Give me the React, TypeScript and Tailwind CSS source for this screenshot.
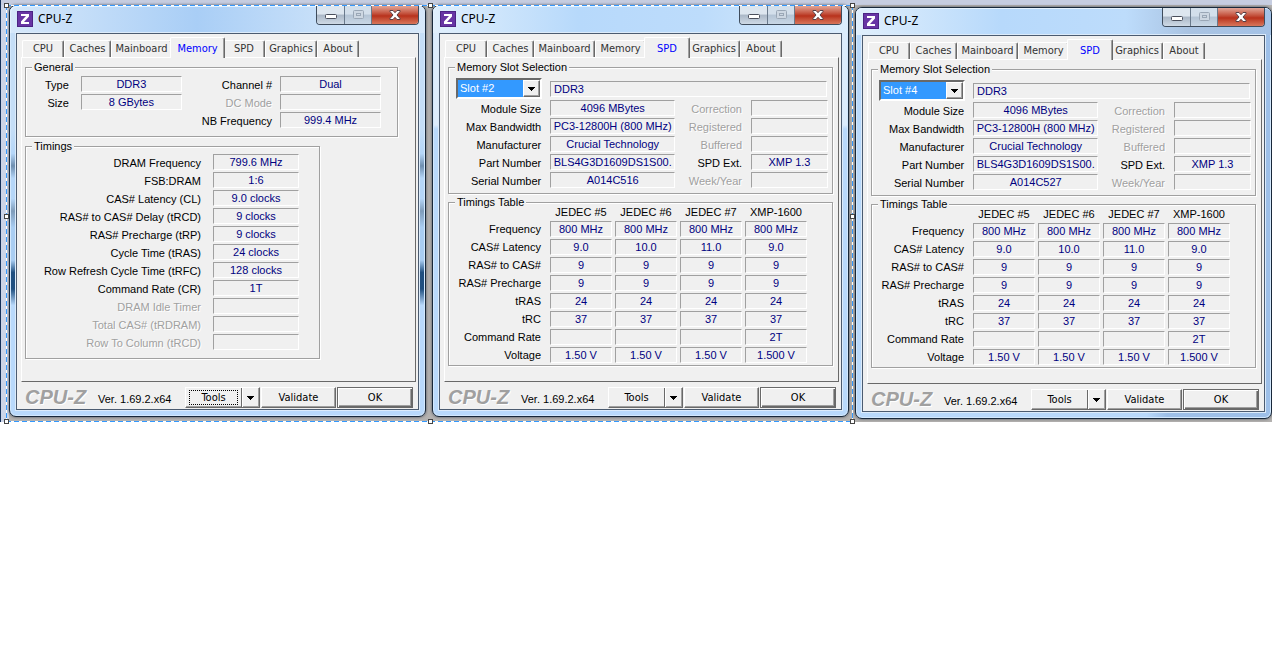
import { clsx } from 'clsx'
import type { ReactNode } from 'react'

type TabName = 'CPU' | 'Caches' | 'Mainboard' | 'Memory' | 'SPD' | 'Graphics' | 'About'

const TABS: { name: TabName; width: string }[] = [
  { name: 'CPU', width: 'w-[42px]' },
  { name: 'Caches', width: 'w-[47px]' },
  { name: 'Mainboard', width: 'w-[61px]' },
  { name: 'Memory', width: 'w-[51px]' },
  { name: 'SPD', width: 'w-[42px]' },
  { name: 'Graphics', width: 'w-[52px]' },
  { name: 'About', width: 'w-[42px]' },
]

const GENERAL_LEFT = [
  ['Type', 'DDR3'],
  ['Size', '8 GBytes'],
]

const GENERAL_RIGHT = [
  ['Channel #', 'Dual'],
  ['DC Mode', ''],
  ['NB Frequency', '999.4 MHz'],
]

const MEMORY_TIMINGS = [
  ['DRAM Frequency', '799.6 MHz'],
  ['FSB:DRAM', '1:6'],
  ['CAS# Latency (CL)', '9.0 clocks'],
  ['RAS# to CAS# Delay (tRCD)', '9 clocks'],
  ['RAS# Precharge (tRP)', '9 clocks'],
  ['Cycle Time (tRAS)', '24 clocks'],
  ['Row Refresh Cycle Time (tRFC)', '128 clocks'],
  ['Command Rate (CR)', '1T'],
  ['DRAM Idle Timer', ''],
  ['Total CAS# (tRDRAM)', ''],
  ['Row To Column (tRCD)', ''],
]

const MODULE_RIGHT = [
  ['Correction', ''],
  ['Registered', ''],
  ['Buffered', ''],
  ['SPD Ext.', 'XMP 1.3'],
  ['Week/Year', ''],
]

const PROFILES = ['JEDEC #5', 'JEDEC #6', 'JEDEC #7', 'XMP-1600']

const SPD_TIMINGS: [string, string[]][] = [
  ['Frequency', ['800 MHz', '800 MHz', '800 MHz', '800 MHz']],
  ['CAS# Latency', ['9.0', '10.0', '11.0', '9.0']],
  ['RAS# to CAS#', ['9', '9', '9', '9']],
  ['RAS# Precharge', ['9', '9', '9', '9']],
  ['tRAS', ['24', '24', '24', '24']],
  ['tRC', ['37', '37', '37', '37']],
  ['Command Rate', ['', '', '', '2T']],
  ['Voltage', ['1.50 V', '1.50 V', '1.50 V', '1.500 V']],
]

const SUNKEN = 'border border-[#a0a0a0] border-r-white border-b-white'
const RAISED =
  'border border-white border-r-[#696969] border-b-[#696969] shadow-[inset_-1px_-1px_0_#a0a0a0]'

function Value({ text, className }: { text: string; className?: string }) {
  return (
    <output
      className={clsx('block h-4 text-center leading-[14px] text-[#000080]', SUNKEN, className)}
    >
      {text}
    </output>
  )
}

function Rows({ rows, width }: { rows: string[][]; width: string }) {
  return (
    <div className="flex flex-col gap-[2px]">
      {rows.map(([label, value]) => (
        <div key={label} className="flex h-4 items-start justify-end">
          <span
            className={clsx(
              'leading-[18px] whitespace-nowrap',
              !value && 'text-[#a0a0a0] [text-shadow:1px_1px_0_#fff]',
            )}
          >
            {label}
          </span>
          <Value text={value} className={width} />
        </div>
      ))}
    </div>
  )
}

function Group({ title, className, children }: { title: string; className?: string; children: ReactNode }) {
  return (
    <fieldset
      className={clsx(
        'min-w-0 border border-[#a0a0a0] shadow-[1px_1px_0_#fff,inset_1px_1px_0_#fff]',
        className,
      )}
    >
      <legend className="ml-[6px] bg-[#f0f0f0] px-[2px] leading-[13px]">{title}</legend>
      {children}
    </fieldset>
  )
}

function MemoryPage() {
  return (
    <>
      <Group title="General" className="mr-[17px] h-[76px]">
        <div className="flex justify-between pt-[2px] pr-[16px] pl-[19px]">
          <Rows rows={GENERAL_LEFT} width="ml-[12px] w-[101px]" />
          <Rows rows={GENERAL_RIGHT} width="ml-[8px] w-[101px]" />
        </div>
      </Group>
      <Group title="Timings" className="mt-[3px] mr-[95px] h-[219px]">
        <div className="pt-px pr-[20px]">
          <Rows rows={MEMORY_TIMINGS} width="ml-[12px] w-[86px]" />
        </div>
      </Group>
    </>
  )
}

function SpdPage({ slot, serial }: { slot: string; serial: string }) {
  const moduleLeft = [
    ['Module Size', '4096 MBytes'],
    ['Max Bandwidth', 'PC3-12800H (800 MHz)'],
    ['Manufacturer', 'Crucial Technology'],
    ['Part Number', 'BLS4G3D1609DS1S00.'],
    ['Serial Number', serial],
  ]

  return (
    <>
      <Group title="Memory Slot Selection" className="mr-[5px] h-[133px]">
        <div className="flex items-center gap-2 pt-[4px] pr-[5px] pl-[7px]">
          <div className="relative h-[21px] w-[86px] border-2 border-[#696969] border-r-white border-b-white bg-white">
            <select
              aria-label="Memory slot"
              defaultValue={slot}
              className="block h-[17px] w-[65px] appearance-none bg-[#3399ff] pl-[2px] leading-[17px] text-white"
            >
              <option>{slot}</option>
            </select>
            <span
              className={clsx(
                'pointer-events-none absolute top-0 right-0 flex h-[17px] w-[17px] items-center justify-center bg-[#f0f0f0]',
                RAISED,
              )}
            >
              <DownArrow />
            </span>
          </div>
          <output className={clsx('block h-4 flex-1 pl-[3px] leading-[14px] text-[#000080]', SUNKEN)}>
            DDR3
          </output>
        </div>
        <div className="flex justify-between pt-px pr-[4px] pl-[17px]">
          <Rows rows={moduleLeft} width="ml-[9px] w-[125px]" />
          <Rows rows={MODULE_RIGHT} width="ml-[9px] w-[77px]" />
        </div>
      </Group>
      <Group title="Timings Table" className="mt-[2px] mr-[5px] h-[170px]">
        <table className="-mt-[5px] mr-[22px] ml-auto border-separate border-spacing-x-[3px] border-spacing-y-[2px]">
          <thead>
            <tr>
              <td />
              {PROFILES.map((profile) => (
                <th key={profile} className="p-0 pb-px leading-[12px] font-normal whitespace-nowrap">
                  {profile}
                </th>
              ))}
            </tr>
          </thead>
          <tbody>
            {SPD_TIMINGS.map(([label, values]) => (
              <tr key={label}>
                <th className="p-0 pr-[6px] text-right leading-4 font-normal whitespace-nowrap">{label}</th>
                {values.map((value, i) => (
                  <td
                    key={i}
                    className={clsx('h-4 w-[62px] p-0 text-center leading-[14px] text-[#000080]', SUNKEN)}
                  >
                    {value}
                  </td>
                ))}
              </tr>
            ))}
          </tbody>
        </table>
      </Group>
    </>
  )
}

function DownArrow() {
  return (
    <svg width="7" height="4" viewBox="0 0 7 4" shapeRendering="crispEdges" aria-hidden="true">
      <path d="M0 0h7v1H0zM1 1h5v1H1zM2 2h3v1H2zM3 3h1v1H3z" />
    </svg>
  )
}

function TitleBar({ className }: { className: string }) {
  return (
    <header
      className={clsx(
        '-mx-[6px] flex h-[27px] items-start rounded-t-[6px] pr-[6px] pl-[7px] shadow-[inset_1px_1px_0_#e4f2ff]',
        className,
      )}
    >
      <svg className="mt-[5px]" width="16" height="16" viewBox="0 0 16 16" aria-hidden="true">
        <rect width="16" height="16" fill="#4c2384" />
        <rect x="1" y="1" width="14" height="14" fill="#6835a4" />
        <path d="M4 3h8v2.500L7 11h5v2H4v-2.500L9 5H4z" fill="#fff" />
      </svg>
      <h1 className="ml-[5px] pt-[4px] font-['Noto_Sans',sans-serif] text-[12px] leading-[18px]">CPU-Z</h1>
      <div className="ml-auto flex h-[19px] overflow-hidden rounded-b-[4px] border border-t-0 border-[#3f4c5c]">
        <button
          type="button"
          aria-label="Minimize"
          className="flex w-[28px] justify-center border-r border-[#6a7a8c] bg-linear-to-b from-[#dde6ef] from-45% via-[#aab7c6] via-50% to-[#cfdae6] pt-[8px]"
        >
          <svg width="12" height="5" viewBox="0 0 12 5" aria-hidden="true">
            <rect x=".5" y=".5" width="11" height="4" rx="1" fill="#fff" stroke="#4a4f5c" />
          </svg>
        </button>
        <button
          type="button"
          aria-label="Maximize"
          disabled
          className="flex w-[27px] justify-center border-r border-[#6a7a8c] bg-linear-to-b from-[#d3dfeb] from-45% via-[#b4c4d5] via-50% to-[#c9d7e5] pt-[4px]"
        >
          <svg width="11" height="9" viewBox="0 0 11 9" fill="none" aria-hidden="true">
            <rect x=".5" y=".5" width="10" height="8" rx="1" fill="#cdd7e2" stroke="#9aa7b6" />
            <rect x="3.5" y="3.5" width="4" height="2" stroke="#9aa7b6" />
          </svg>
        </button>
        <button
          type="button"
          aria-label="Close"
          className="flex w-[46px] justify-center bg-linear-to-b from-[#e0a597] from-0% via-[#b8311b] via-55% to-[#d8755a] pt-[4px]"
        >
          <svg width="12" height="10" viewBox="0 0 12 10" aria-hidden="true">
            <path
              d="M1 .5h3L6 2.7 8 .5h3v1L8 5l3 3.500v1H8L6 7.300 4 9.500H1v-1L4 5 1 1.500z"
              fill="#fff"
              stroke="#574046"
            />
          </svg>
        </button>
      </div>
    </header>
  )
}

function CpuzWindow({
  tab,
  toolsFocused,
  titleClassName,
  className,
  children,
}: {
  tab: TabName
  toolsFocused?: boolean
  titleClassName: string
  className?: string
  children: ReactNode
}) {
  return (
    <section
      className={clsx(
        'min-w-0 flex-1 rounded-[7px] border border-[#18283a] px-[6px] pb-[6px] shadow-[inset_0_0_0_1px_#d3e8fd,0_0_3px_#444a55]',
        className,
      )}
    >
      <TitleBar className={titleClassName} />
      <div className="border border-[#4b5b70] bg-[#f0f0f0] pt-[4px] pr-[2px] pl-[4px] shadow-[0_0_0_1px_#dcebfa]">
        <nav
          className="flex h-[19px] items-end pl-px font-['DejaVu_Sans_Condensed','Noto_Sans',sans-serif]"
          role="tablist"
        >
          {TABS.map(({ name, width }) =>
            name === tab ? (
              <div key={name} className={clsx('relative h-[20px]', width)}>
                <button
                  type="button"
                  role="tab"
                  aria-selected="true"
                  className="absolute -inset-x-[2px] top-0 h-[21px] rounded-t-[2px] border border-b-0 border-white border-r-[#696969] bg-[#f0f0f0] leading-[17px] text-[#0000ff] shadow-[inset_-1px_0_0_#a0a0a0]"
                >
                  {name}
                </button>
              </div>
            ) : (
              <button
                key={name}
                type="button"
                role="tab"
                aria-selected="false"
                className={clsx(
                  'h-[17px] rounded-t-[2px] border border-b-0 border-white border-r-[#696969] leading-[16px] text-[#333] shadow-[inset_-1px_0_0_#a0a0a0]',
                  width,
                )}
              >
                {name}
              </button>
            ),
          )}
        </nav>
        <div className="h-[325px] border border-white border-r-[#696969] border-b-[#696969] pt-[3px] pl-[3px]">
          {children}
        </div>
        <footer className="flex h-[27px] items-start pt-[5px] pr-[3px] pl-[4px]">
          <span className="w-[73px] text-[20px] leading-[20px] font-bold text-[#a0a0a0] italic [text-shadow:1px_1px_0_#fff]">
            CPU-Z
          </span>
          <span className="leading-[24px] whitespace-nowrap">Ver. 1.69.2.x64</span>
          <div className="ml-auto flex h-[21px] gap-px font-['DejaVu_Sans_Condensed','Noto_Sans',sans-serif] leading-[19px]">
            <div className={clsx('flex w-[75px]', RAISED)}>
              <button type="button" className="flex-1 px-[3px] py-[2px]">
                <span
                  className={clsx(
                    'block border border-dotted leading-[13px]',
                    toolsFocused ? 'border-black' : 'border-transparent',
                  )}
                >
                  Tools
                </span>
              </button>
              <button
                type="button"
                aria-label="More tools"
                className="flex w-[18px] items-center justify-center border-l border-[#696969] shadow-[inset_1px_0_0_#fff]"
              >
                <DownArrow />
              </button>
            </div>
            <button type="button" className={clsx('w-[75px]', RAISED)}>
              Validate
            </button>
            <button
              type="button"
              className="w-[76px] border border-[#696969] shadow-[inset_1px_1px_0_#fff,inset_-1px_-1px_0_#696969,inset_-2px_-2px_0_#a0a0a0]"
            >
              OK
            </button>
          </div>
        </footer>
      </div>
    </section>
  )
}

function Handle({ className }: { className: string }) {
  return <span className={clsx('absolute size-[5px] border border-[#444] bg-white', className)} />
}

const DASH_X = 'absolute inset-x-0 h-px bg-[repeating-linear-gradient(90deg,#3399ff_0_5px,#fff_5px_8px)]'
const DASH_Y = 'absolute inset-y-0 w-px bg-[repeating-linear-gradient(#3399ff_0_5px,#fff_5px_8px)]'

// marquee around the first two windows
function Selection() {
  return (
    <div className="pointer-events-none absolute top-[5px] bottom-0 left-[5px] w-2/3" aria-hidden="true">
      <span className={clsx(DASH_X, 'top-0')} />
      <span className={clsx(DASH_X, 'bottom-0')} />
      <span className={clsx(DASH_Y, 'left-0')} />
      <span className={clsx(DASH_Y, 'right-0')} />
      <Handle className="-top-[2px] -left-[2px]" />
      <Handle className="-top-[2px] left-1/2 -ml-[2px]" />
      <Handle className="-top-[2px] -right-[2px]" />
      <Handle className="top-1/2 -left-[2px]" />
      <Handle className="top-1/2 -right-[2px]" />
      <Handle className="-bottom-[2px] -left-[2px]" />
      <Handle className="-bottom-[2px] left-1/2 -ml-[2px]" />
      <Handle className="-right-[2px] -bottom-[2px]" />
    </div>
  )
}

export default function App() {
  return (
    <div className="min-h-screen bg-white font-['Liberation_Sans',Arial,sans-serif] text-[11px] text-black">
      <main className="relative flex items-start gap-[6px] border-l border-[#14305a] bg-[linear-gradient(#c6cde0_5px,transparent_5px),linear-gradient(90deg,#cdd5e8_8px,#b4b2b0_8px)] pt-[5px] pb-[3px] pl-[8px]">
        <CpuzWindow
          tab="Memory"
          toolsFocused
          titleClassName="bg-[linear-gradient(90deg,#d6e8fa,#a9cef6_45%,#c8e0f9_75%,#d6e8fa)]"
          className="bg-[linear-gradient(#c5def7_30%,#b5d6f8_36%,#6f8fb0_39%,#b5d6f8_42%,#b5d6f8_47%,#7f9cba_50%,#a9cdf2_54%,#a9cdf2_62%,#1f4f80_65%,#1f4f80_69%,#b9d9fb_73%)]"
        >
          <MemoryPage />
        </CpuzWindow>
        <CpuzWindow
          tab="SPD"
          titleClassName="bg-[linear-gradient(90deg,#e0effc,#b7d9fb_35%,#bddcfb_65%,#dcedfc)]"
          className="bg-[linear-gradient(#dcecfc_29%,#b9d9fb_30%)]"
        >
          <SpdPage slot="Slot #2" serial="A014C516" />
        </CpuzWindow>
        <CpuzWindow
          tab="SPD"
          titleClassName="bg-[linear-gradient(90deg,#e0effc,#b7d9fb_35%,#bddcfb_65%,#a9c3e2_80%,#a4c2e6)]"
          className="mt-[2px] bg-[linear-gradient(90deg,#b9d9fb_70%,#9dbfe8_75%)]"
        >
          <SpdPage slot="Slot #4" serial="A014C527" />
        </CpuzWindow>
        <Selection />
      </main>
    </div>
  )
}
